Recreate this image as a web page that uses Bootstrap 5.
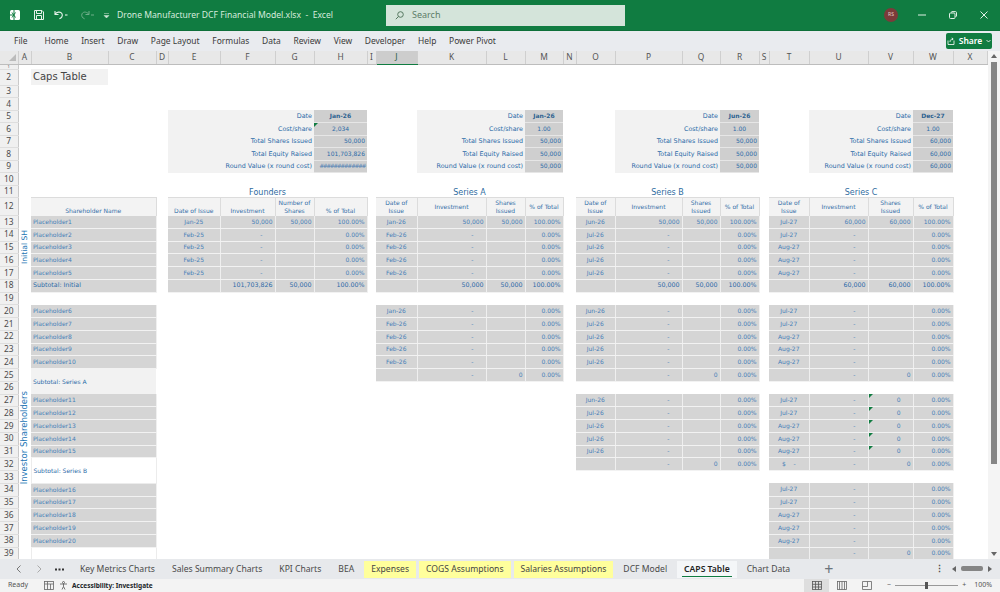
<!DOCTYPE html>
<html lang="en">
<head>
    <meta charset="UTF-8">
    <title>Drone Manufacturer DCF Financial Model.xlsx - Excel</title>
    <link href="https://cdn.jsdelivr.net/npm/bootstrap@5.3.0/dist/css/bootstrap.min.css" rel="stylesheet">
    <style>
        html, body { height: 592px; overflow: hidden; background: #fff; }
        body { font-family: "Noto Sans", sans-serif; font-size: 9px; color: #333; }
        .app { width: 1000px; height: 592px; }

        /* title bar */
        .titlebar { height: 31px; background: #107c41; color: #fff; border-bottom: 1px solid #0e6f3a; }
        .titlebar > * { flex-shrink: 0; }
        .doc-title { width: 269px; color: #d5ebdd; font-size: 8.6px; white-space: nowrap; }
        .qat { width: 117px; padding-left: 9px; }
        .searchbox { width: 239px; height: 21px; background: #d4e4da; color: #5c7d68; font-size: 9px; padding-left: 9px; }
        .avatar { width: 14px; height: 14px; border-radius: 50%; background: #7b3b3a; color: #e8cfc8; font-size: 5px; margin-left: 259px; }
        .winbtn { width: 31px; }

        /* ribbon tabs */
        .ribbon { height: 20px; background: #e9ebef; font-size: 8.45px; color: #3a3a3a; padding-left: 14px; }
        .ribbon span { margin-right: 12.7px; white-space: nowrap; }
        .ribbon .file-tab { margin-right: 17px; }
        .share-btn { width: 46px; height: 16px; padding: 0; margin-right: 8px; background: #107c41; color: #fff; font-size: 8.5px; font-weight: 600; border-radius: 2px; border: 0; }

        /* sheet */
        .sheetwrap { height: 508px; overflow: hidden; }
        .sheetarea { width: 988px; overflow: hidden; }
        .sheet { table-layout: fixed; width: 987px; font-family: "DejaVu Sans", sans-serif; font-size: 6px; color: #4780b8; }
        .sheet th, .sheet td { padding: 0 2px; overflow: hidden; white-space: nowrap; font-weight: 400; vertical-align: middle; line-height: 1; }
        .sheet thead th { height: 13px; background: #e8e8e8; border-right: 1px solid #cfcfcf; border-bottom: 1px solid #bdbdbd; text-align: center; font-family: "Noto Sans", sans-serif; font-size: 8.4px; color: #555; }
        .sheet thead th.col-on { background: #cdcdcd; border-bottom: 1px solid #107c41; color: #2c5f42; }
        .sheet tbody th { background: #f0f0f0; border-right: 1px solid #c9c9c9; border-bottom: 1px solid #dedede; text-align: center; font-family: "Noto Sans", sans-serif; font-size: 8.4px; color: #4c4c4c; padding: 0; }
        .h-a { height: 12.5px; }
        .h-b { height: 12.75px; }
        .h-one { height: 5px; font-size: 4px !important; }
        .h-head { height: 18px; }
        .h-two { height: 16px; }

        .gray { background: #d5d5d5; border-right: 1px solid #efefef; border-bottom: 1px solid #f2f2f2; }
        .gray-dark { background: #cfcfcf; border-bottom: 1px solid #e6e6e6; }
        .soft { background: #f2f2f2; }
        .ruled { border: 1px solid #ececec; border-top: 0; }
        .sheet td.head-cell { background: #f3f3f3; border-right: 1px solid #dcdcdc; border-top: 1px solid #dcdcdc; white-space: normal; text-align: center; line-height: 8px; color: #356fa8; }
        .sheet td.head-low { vertical-align: bottom; padding-bottom: 1px; }
        .sheet td.round-title { font-size: 8px; text-align: center; color: #2f6c9f; vertical-align: bottom; }
        .sum { color: #2b6ba8; }
        .sum-label { font-size: 6.4px; }
        .strong { font-size: 6.3px; color: #2b6ba8; }
        .sheet td.date-cell { font-weight: 700; color: #2b6190; }
        .sheet td.dash { padding-right: 12px; }
        .hashes { letter-spacing: -1.5px; color: #4f7fb4; }
        .tick { position: relative; }
        .tick::before { content: ""; position: absolute; left: 0; top: 0; border-top: 4px solid #107c41; border-right: 4px solid transparent; }
        .sheet-title { font-size: 10px; color: #444; background: #f2f2f2; }
        .sheet td.side-label { padding: 0; text-align: center; }
        .side-label div { writing-mode: vertical-rl; transform: rotate(180deg); display: inline-block; font-size: 7.6px; color: #2476b5; line-height: 1; }
        .side-label div.wide-label { font-size: 8.5px; }

        /* scroll bars */
        .vscroll { width: 12px; background: #f4f4f4; position: relative; }
        .vscroll .thumb { width: 6px; height: 402px; background: #858585; margin: 11px auto 0; }
        .arrow-up { border: 3px solid transparent; border-bottom: 4px solid #666; border-top: 0; width: 0; position: absolute; left: 3px; top: 3px; }
        .arrow-down { border: 3px solid transparent; border-top: 4px solid #666; border-bottom: 0; width: 0; position: absolute; left: 3px; bottom: 3px; }

        /* sheet tabs */
        .tabsbar { height: 20px; background: #e7e9ec; font-size: 8.6px; color: #4a4a4a; }
        .tabnav { width: 73px; padding-left: 16px; }
        .dots-gap { margin-left: 13px; }
        .sheet-tab { padding: 0 7px; height: 17px; white-space: nowrap; line-height: 17px; margin-right: 3px; }
        .sheet-tab.warm { background: #ffff9c; color: #444; }
        .sheet-tab.on { background: #f4f6f8; color: #222; font-weight: 600; position: relative; }
        .sheet-tab.on::after { content: ""; position: absolute; left: 5px; right: 5px; bottom: 1px; height: 1px; background: #107c41; }
        .hthumb { width: 22px; height: 5px; border-radius: 2px; background: #858585; }

        /* status bar */
        .statusbar { height: 13px; background: #f3f3f3; font-size: 7px; color: #555; }
        .access-text { font-size: 6.5px; white-space: nowrap; }
        .access-gap { margin-left: 5px; }
        .viewbtn { width: 25px; height: 13px; }
        .viewbtn.on { background: #dedede; }
        .zoomtrack { width: 63px; height: 1px; background: #999; position: relative; }
        .zoomtrack i { position: absolute; left: 30px; top: -3px; width: 3px; height: 7px; background: #555; }
    </style>
</head>
<body>
<div class="app d-flex flex-column">
    <!-- Title bar -->
    <div class="titlebar d-flex align-items-center flex-shrink-0">
        <div class="qat d-flex align-items-center gap-2">
            <svg width="12" height="12" viewBox="0 0 12 12"><rect x="1" y="1" width="10" height="10" rx="1.5" fill="#fff"/><path d="M1 6h4M5 1v10M3 3.5l3.5 5M6.5 3.5L3 8.5" stroke="#107c41" stroke-width="1" fill="none"/></svg>
            <svg class="ms-1" width="12" height="12" viewBox="0 0 12 12" fill="none" stroke="#e6f2ea"><path d="M1.5 1.5h7.500l1.500 1.500v7.500h-9z"/><path d="M3.500 1.500v3h5v-3M3.500 10.500v-4h5v4"/></svg>
            <svg width="18" height="12" viewBox="0 0 18 12" fill="none" stroke="#e6f2ea" stroke-width="1.1"><path d="M2 2v3.500h3.500M2.200 5.300C3.500 3 7.500 2 9 4.800c1 2.200-.5 4.300-2.600 5"/><path d="M12 6h2.500"/></svg>
            <svg width="16" height="12" viewBox="0 0 16 12" fill="none" stroke="#6fae8a" stroke-width="1"><path d="M10 2v3.500H6.500M9.800 5.300C8.500 3 4.500 2 3 4.800c-1 2.200.5 4.300 2.600 5"/><path d="M12 6h3"/></svg>
            <svg width="7" height="7" viewBox="0 0 7 7"><path d="M1 1.500h5M1 3.500h5l-2.500 2.500z" fill="#cfe5d6" stroke="#cfe5d6" stroke-width=".5"/></svg>
        </div>
        <div class="doc-title">Drone Manufacturer DCF Financial Model.xlsx &nbsp;-&nbsp; Excel</div>
        <div class="searchbox d-flex align-items-center gap-2">
            <svg width="9" height="9" viewBox="0 0 9 9" fill="none" stroke="#55785f"><circle cx="5.500" cy="3.500" r="2.800"/><path d="M3.500 5.500L.8 8.200"/></svg>
            <span>Search</span>
        </div>
        <div class="avatar d-flex align-items-center justify-content-center">RS</div>
        <div class="winbtn ms-2 d-flex justify-content-center"><svg width="8" height="8" viewBox="0 0 8 8"><path d="M0 4h8" stroke="#dff0e5"/></svg></div>
        <div class="winbtn d-flex justify-content-center"><svg width="8" height="8" viewBox="0 0 8 8" fill="none" stroke="#dff0e5"><rect x=".5" y="2" width="5.500" height="5.500" rx="1"/><path d="M2 1.500 3 .6h3.500c.6 0 1 .4 1 1V5L6.500 6"/></svg></div>
        <div class="winbtn d-flex justify-content-center"><svg width="8" height="8" viewBox="0 0 8 8"><path d="M.5.500l7 7M7.500.500l-7 7" stroke="#dff0e5"/></svg></div>
    </div>

    <!-- Ribbon tabs -->
    <div class="ribbon d-flex align-items-center flex-shrink-0">
        <span class="file-tab">File</span><span>Home</span><span>Insert</span><span>Draw</span><span>Page Layout</span><span>Formulas</span><span>Data</span><span>Review</span><span>View</span><span>Developer</span><span>Help</span><span>Power Pivot</span>
        <button type="button" class="btn share-btn ms-auto d-flex align-items-center justify-content-center gap-1">
            <svg width="8" height="8" viewBox="0 0 8 8" fill="none" stroke="#fff" stroke-width=".8"><path d="M1 3.500v4h6v-4M3 5c0-2 1-3 3-3M4.800.800 6.200 2 4.800 3.200"/></svg>Share<svg width="5" height="4" viewBox="0 0 5 4" fill="none" stroke="#fff" stroke-width=".8"><path d="M.5 1l2 2 2-2"/></svg>
        </button>
    </div>

    <!-- Sheet -->
    <div class="sheetwrap d-flex flex-shrink-0">
        <div class="sheetarea">
            <table class="sheet">
                <colgroup id="sheetCols"></colgroup>
                <thead><tr id="colHeads"></tr></thead>
                <tbody id="sheetBody"></tbody>
            </table>
        </div>
        <div class="vscroll flex-shrink-0">
            <div class="arrow-up"></div>
            <div class="thumb"></div>
            <div class="arrow-down"></div>
        </div>
    </div>

    <!-- Sheet tabs -->
    <div class="tabsbar d-flex align-items-center flex-shrink-0">
        <div class="tabnav d-flex align-items-center flex-shrink-0">
            <svg width="5" height="8" viewBox="0 0 5 8" fill="none" stroke="#777"><path d="M4.500.500 1 4l3.500 3.500"/></svg>
            <svg class="ms-3" width="5" height="8" viewBox="0 0 5 8" fill="none" stroke="#aaa"><path d="M.5.500 4 4 .5 7.500"/></svg>
            <svg class="dots-gap" width="9" height="3" viewBox="0 0 9 3" fill="#333"><rect y=".5" width="2" height="2"/><rect x="3.500" y=".5" width="2" height="2"/><rect x="7" y=".5" width="2" height="2"/></svg>
        </div>
        <div class="d-flex align-items-center" id="tabList"></div>
        <div class="ms-4 fs-6 lh-1 text-secondary" id="addTab">+</div>
        <div class="d-flex align-items-center ms-auto me-2 gap-2">
            <span class="fw-bold">&#8942;</span>
            <span class="d-flex align-items-center gap-1">
                <svg width="5" height="6" viewBox="0 0 5 6"><path d="M4 0v6L0 3z" fill="#666"/></svg>
                <span class="hthumb"></span>
                <svg width="5" height="6" viewBox="0 0 5 6"><path d="M1 0v6l4-3z" fill="#666"/></svg>
            </span>
        </div>
    </div>

    <!-- Status bar -->
    <div class="statusbar d-flex align-items-center flex-shrink-0">
        <span class="ps-2">Ready</span>
        <svg class="ms-3" width="10" height="9" viewBox="0 0 10 9" fill="none" stroke="#666" stroke-width=".8"><rect x=".5" y=".5" width="9" height="8"/><path d="M.5 3h9M3.500.500v8M6.500 3v5.500"/></svg>
        <svg class="access-gap" width="9" height="9" viewBox="0 0 9 9" fill="none" stroke="#555" stroke-width=".8"><circle cx="4.500" cy="1.500" r="1"/><path d="M1 3h7M4.500 3v2.500M4.500 5.500L3 8.500M4.500 5.500l1.500 3"/></svg>
        <span class="ms-1 fw-bold text-dark access-text">Accessibility: Investigate</span>
        <div class="ms-auto d-flex align-items-center">
            <div class="viewbtn on d-flex align-items-center justify-content-center"><svg width="10" height="9" viewBox="0 0 10 9" fill="none" stroke="#555" stroke-width=".8"><rect x=".5" y=".5" width="9" height="8"/><path d="M.5 3.300h9M.5 6h9M3.500.500v8M6.500.500v8"/></svg></div>
            <div class="viewbtn d-flex align-items-center justify-content-center"><svg width="10" height="9" viewBox="0 0 10 9" fill="none" stroke="#666" stroke-width=".8"><rect x=".5" y=".5" width="9" height="8"/><path d="M2.500.500v8M5 .500v8M7.500.500v8"/></svg></div>
            <div class="viewbtn d-flex align-items-center justify-content-center"><svg width="10" height="9" viewBox="0 0 10 9" fill="none" stroke="#666" stroke-width=".8"><path d="M.5.500h9v8h-9zM.5 5.500h5v-5"/></svg></div>
            <span class="ms-2 me-1">&minus;</span>
            <div class="zoomtrack"><i></i></div>
            <span class="ms-1">+</span>
            <span class="ms-2 me-2">100%</span>
        </div>
    </div>
</div>

<script src="https://cdn.jsdelivr.net/npm/bootstrap@5.3.0/dist/js/bootstrap.bundle.min.js"></script>
<script>
    // Column widths of the sheet, from A to X
    const colNames = "ABCDEFGHIJKLMNOPQRSTUVWX".split("");
    const colWidths = [13, 77, 48, 12, 52, 55, 39, 53, 9, 41, 69, 39, 38, 13, 39, 67, 38, 39, 10, 40, 59, 45, 40, 34];
    const cells = {};

    function put(row, col, text, cls, colspan, rowspan) {
        cells[row] = cells[row] || {};
        cells[row][col] = { text: text, cls: cls || "", colspan: colspan || 1, rowspan: rowspan || 1 };
    }

    // Top box with round figures: label cells merged, value in the last column
    function summaryBox(first, span, values) {
        const labels = ["Date", "Cost/share", "Total Shares Issued", "Total Equity Raised", "Round Value (x round cost)"];
        const valueCol = String.fromCharCode(first.charCodeAt(0) + span);
        labels.forEach((label, i) => {
            const row = 5 + i;
            put(row, first, label, "soft text-end sum sum-label", span);
            let cls = "gray-dark sum ";
            if (i === 0) cls += "text-center date-cell";
            else if (i === 1) cls += "text-center";
            else cls += "text-end";
            if (values.tick === i) cls += " tick";
            put(row, valueCol, values.list[i], cls);
        });
    }

    // One line of a shareholder block
    function shareLine(row, cols, date, inv, shares, pct, extra) {
        const x = extra || "";
        put(row, cols[0], date, "gray text-center " + x);
        put(row, cols[1], inv, "gray text-end " + (inv === "-" ? "dash " : "") + x);
        put(row, cols[2], shares, "gray text-end " + (row >= 27 && cols[2] === "V" && row <= 31 ? "tick dash " : "") + x);
        put(row, cols[3], pct, "gray text-end " + x);
    }

    function shareBlock(start, cols, dates, topRow) {
        dates.forEach((d, i) => {
            if (i === 0 && topRow) shareLine(start, cols, d, topRow, topRow, "100.00%");
            else shareLine(start + i, cols, d, "-", cols[2] === "V" && start === 27 ? "0" : "", "0.00%");
        });
    }

    // Header row of a round
    function roundHead(cols, title, low, h3) {
        put(11, cols[0], title, "round-title", 4);
        const heads = ["Date of Issue", "Investment", h3, "% of Total"];
        cols.forEach((c, i) => put(12, c, heads[i], "head-cell" + (low ? " head-low" : "")));
    }

    // Caps table title
    put(2, "B", "Caps Table", "sheet-title");

    // Summary boxes
    summaryBox("E", 3, { list: ["Jan-26", "2,034", "50,000", "101,703,826", "<span class='hashes'>#############</span>"], tick: 1 });
    summaryBox("K", 2, { list: ["Jan-26", "1.00", "50,000", "50,000", "50,000"] });
    summaryBox("P", 2, { list: ["Jun-26", "1.00", "50,000", "50,000", "50,000"] });
    summaryBox("U", 2, { list: ["Dec-27", "1.00", "60,000", "60,000", "60,000"] });

    const founders = ["E", "F", "G", "H"];
    const seriesA = ["J", "K", "L", "M"];
    const seriesB = ["O", "P", "Q", "R"];
    const seriesC = ["T", "U", "V", "W"];

    roundHead(founders, "Founders", true, "Number of Shares");
    roundHead(seriesA, "Series A", false, "Shares Issued");
    roundHead(seriesB, "Series B", false, "Shares Issued");
    roundHead(seriesC, "Series C", false, "Shares Issued");

    // Shareholder names
    put(12, "B", "Shareholder Name", "head-cell head-low", 2);
    const names = [[13, 1], [20, 6], [27, 11], [34, 16]];
    names.forEach(([row, n]) => {
        for (let i = 0; i < 5; i++) put(row + i, "B", "Placeholder" + (n + i), "gray", 2);
    });
    put(18, "B", "Subtotal: Initial", "gray strong", 2);
    put(25, "B", "Subtotal: Series A", "soft sum", 2, 2);
    put(32, "B", "Subtotal: Series B", "ruled sum", 2, 2);
    put(39, "B", "", "ruled", 2);

    // Side labels
    put(13, "A", "<div>Initial SH</div>", "side-label", 1, 5);
    put(26, "A", "<div class='wide-label'>Investor Shareholders</div>", "side-label", 1, 9);

    // Initial block
    shareBlock(13, founders, ["Jan-25", "Feb-25", "Feb-25", "Feb-25", "Feb-25"], "50,000");
    shareLine(18, founders, "", "101,703,826", "50,000", "100.00%", "strong");
    shareBlock(13, seriesA, ["Jan-26", "Feb-26", "Feb-26", "Feb-26", "Feb-26"], "50,000");
    shareLine(18, seriesA, "", "50,000", "50,000", "100.00%", "strong");
    shareBlock(13, seriesB, ["Jun-26", "Jul-26", "Jul-26", "Jul-26", "Jul-26"], "50,000");
    shareLine(18, seriesB, "", "50,000", "50,000", "100.00%", "strong");
    shareBlock(13, seriesC, ["Jul-27", "Jul-27", "Aug-27", "Aug-27", "Aug-27"], "60,000");
    shareLine(18, seriesC, "", "60,000", "60,000", "100.00%", "strong");

    // Investor blocks
    shareBlock(20, seriesA, ["Jan-26", "Feb-26", "Feb-26", "Feb-26", "Feb-26"]);
    shareLine(25, seriesA, "", "-", "0", "0.00%");
    shareBlock(20, seriesB, ["Jun-26", "Jul-26", "Jul-26", "Jul-26", "Jul-26"]);
    shareLine(25, seriesB, "", "-", "0", "0.00%");
    shareBlock(20, seriesC, ["Jul-27", "Jul-27", "Aug-27", "Aug-27", "Aug-27"]);
    shareLine(25, seriesC, "", "-", "0", "0.00%");
    shareBlock(27, seriesB, ["Jun-26", "Jul-26", "Jul-26", "Jul-26", "Jul-26"]);
    shareLine(32, seriesB, "", "-", "0", "0.00%");
    shareBlock(27, seriesC, ["Jul-27", "Jul-27", "Aug-27", "Aug-27", "Aug-27"]);
    shareLine(32, seriesC, "$&nbsp;&nbsp;&nbsp;&nbsp;-", "-", "0", "0.00%");
    shareBlock(34, seriesC, ["Jul-27", "Jul-27", "Aug-27", "Aug-27", "Aug-27"]);
    shareLine(39, seriesC, "", "-", "0", "0.00%");

    // Build table
    function rowClass(r) {
        if (r === 1) return "h-one";
        if (r === 2) return "h-two";
        if (r === 12) return "h-head";
        if (r >= 13) return "h-b";
        return "h-a";
    }

    function buildSheet() {
        document.getElementById("sheetCols").innerHTML =
            "<col style='width:18px'>" + colWidths.map(w => "<col style='width:" + w + "px'>").join("");

        let head = "<th><svg width='7' height='7' viewBox='0 0 7 7' class='d-block ms-auto'><path d='M7 0v7H0z' fill='#bbb'/></svg></th>";
        colNames.forEach(c => {
            head += "<th class='" + (c === "J" ? "col-on" : "") + "'>" + c + "</th>";
        });
        document.getElementById("colHeads").innerHTML = head;

        const covered = {};
        let body = "";
        for (let r = 1; r <= 39; r++) {
            body += "<tr class='" + rowClass(r) + "'><th class='" + rowClass(r) + "'>" + r + "</th>";
            for (let c = 0; c < colNames.length; c++) {
                if (covered[r + ":" + c]) continue;
                const cell = cells[r] && cells[r][colNames[c]];
                if (!cell) { body += "<td></td>"; continue; }
                for (let y = 0; y < cell.rowspan; y++) {
                    for (let x = 0; x < cell.colspan; x++) covered[(r + y) + ":" + (c + x)] = true;
                }
                body += "<td class='" + cell.cls + "' colspan='" + cell.colspan + "' rowspan='" + cell.rowspan + "'>" + cell.text + "</td>";
            }
            body += "</tr>";
        }
        document.getElementById("sheetBody").innerHTML = body;
    }

    // Sheet tabs
    const tabs = [
        ["Key Metrics Charts", ""], ["Sales Summary Charts", ""], ["KPI Charts", ""], ["BEA", ""],
        ["Expenses", "warm"], ["COGS Assumptions", "warm"], ["Salaries Assumptions", "warm"],
        ["DCF Model", ""], ["CAPS Table", "on"], ["Chart Data", ""]
    ];

    function buildTabs() {
        document.getElementById("tabList").innerHTML = tabs.map(t =>
            "<div class='sheet-tab " + t[1] + "'>" + t[0] + "</div>").join("");
    }

    buildSheet();
    buildTabs();
</script>
</body>
</html>
